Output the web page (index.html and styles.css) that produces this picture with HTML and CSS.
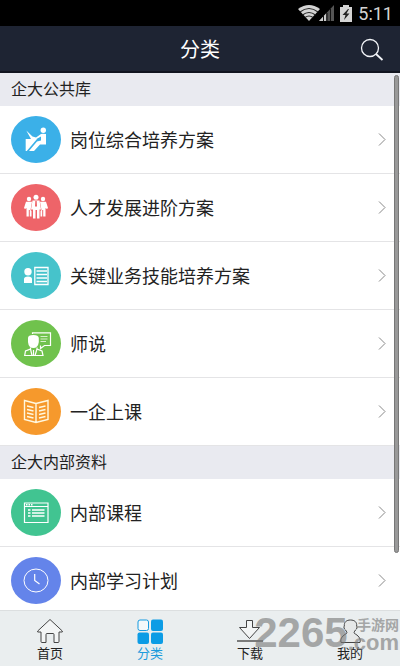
FILE: index.html
```html
<!DOCTYPE html>
<html lang="zh-CN">
<head>
<meta charset="utf-8">
<meta name="viewport" content="width=device-width, initial-scale=1">
<title>分类</title>
<link rel="stylesheet" href="styles.css">
</head>
<body>
<div class="status">
  <svg class="wifi" width="22" height="16" viewBox="0 0 22 16" aria-hidden="true"><path d="M0 4Q11-4 22 4L11 16Z" fill="#d4d4d4"/><path d="M2 7Q11 0 20 7M4.500 10Q11 5 17.500 10M7 12.500Q11 9.500 15 12.500" fill="none" stroke="#222" stroke-width="1.100"/></svg>
  <svg class="signal" width="16" height="16" viewBox="0 0 16 16" aria-hidden="true"><path d="M0 16L15 0V16Z" fill="#555"/><path d="M0 16L7 8.500V16Z" fill="#ccc"/><path d="M4.500 11V16M8 8V16M11.500 4V16" stroke="#111"/></svg>
  <svg class="battery" width="12" height="17" viewBox="0 0 12 17" aria-hidden="true"><path d="M3 0H9V2H12V17H0V2H3Z" fill="#d4d4d4"/><path d="M8 4L2.500 10H5.500L4 15L9.500 8.500H6.500L9 4Z" fill="#222"/></svg>
  <time class="clock">5:11</time>
</div>
<header class="bar">
  <h1 class="bar-title">分类</h1>
  <button class="search" type="button" aria-label="搜索"><svg width="24" height="24" viewBox="0 0 24 24"><circle cx="10" cy="10" r="8.500" fill="none" stroke="#f2f4f8" stroke-width="1.300"/><path d="M16 16L22.500 22" stroke="#f2f4f8" stroke-width="1.800"/></svg></button>
</header>
<main class="content">
  <h2 class="section">企大公共库</h2>
  <ul class="list">
    <li><a class="row" href="#post"><svg class="icon" viewBox="0 0 50 47"><ellipse cx="25" cy="23.500" rx="25" ry="23.500" fill="#3bb0e8"/><g fill="#fff"><circle cx="32.300" cy="14.200" r="2.700"/><path d="M15.300 14.500L21.500 20.500L25 21.500L30 18Q31 17.300 35 18V28.500H29L23 35H18L26 25.500L30 24.500V20.500L25.500 23H20Z"/><path d="M14.700 23H26L15.800 35H14.700Z"/></g></svg><span class="name">岗位综合培养方案</span><svg class="chevron" viewBox="0 0 8 13"><path d="M1 .5L7 6.500L1 12.500"/></svg></a></li>
    <li><a class="row" href="#talent"><svg class="icon" viewBox="0 0 50 47"><ellipse cx="25" cy="23.500" rx="25" ry="23.500" fill="#ee6469"/><g fill="#fff"><circle cx="25" cy="13.200" r="2.500"/><circle cx="18" cy="15" r="2.200"/><circle cx="32" cy="15" r="2.200"/><path d="M21.500 16.500H28.500L30 25.500H28.500V34.500H26V26H24.500V34.500H22V25.500H20Z"/><path d="M15 17.800H21L19.500 26L20.500 27V32.500H18.800V26H17.800V32.500H15.500V24L14 25L13 24Z"/><path d="M35 17.800H29L30.500 26L29.500 27V32.500H31.200V26H32.200V32.500H34.500V24L36 25L37 24Z"/></g><path d="M24.300 17H25.700L26 22L25 23L24 22Z" fill="#ee6469"/></svg><span class="name">人才发展进阶方案</span><svg class="chevron" viewBox="0 0 8 13"><path d="M1 .5L7 6.500L1 12.500"/></svg></a></li>
    <li><a class="row" href="#skills"><svg class="icon" viewBox="0 0 50 47"><ellipse cx="25" cy="23.500" rx="25" ry="23.500" fill="#46c3cb"/><circle cx="17" cy="19.700" r="3.700" fill="#fff"/><path d="M13 31V27Q13 24.500 17 24.500T21 27V31Z" fill="#fff"/><path d="M23.800 15.500H37V32.500H23.800ZM25.500 19H36M25.500 22.500H36M25.500 26H36M25.500 29.500H36" fill="none" stroke="#fff" stroke-width="1.300"/></svg><span class="name">关键业务技能培养方案</span><svg class="chevron" viewBox="0 0 8 13"><path d="M1 .5L7 6.500L1 12.500"/></svg></a></li>
    <li><a class="row" href="#teachers"><svg class="icon" viewBox="0 0 50 47"><ellipse cx="25" cy="23.500" rx="25" ry="23.500" fill="#70c24d"/><path d="M21.500 14V12.800H39.500V25.500H33.500L29.500 28.500V25.500" fill="none" stroke="#fff" stroke-width="1.200"/><path d="M29.500 16.500H36.500M29.500 19H36.500M29.500 21.500H35" stroke="#d8f0cc" stroke-width="1.200"/><path d="M17 18Q17 15 22.300 15T27.800 18V22Q27 28 22.300 28T17 22Z" fill="#fff"/><path d="M19.500 27.500V29L14.500 31L13.700 35.500H32L31 31L26 29V27.500M19.500 29L21 35.500M26 29L24 35.500M22.500 30V35" fill="none" stroke="#fff" stroke-width="1.200"/></svg><span class="name">师说</span><svg class="chevron" viewBox="0 0 8 13"><path d="M1 .5L7 6.500L1 12.500"/></svg></a></li>
    <li><a class="row" href="#lesson"><svg class="icon" viewBox="0 0 50 47"><ellipse cx="25" cy="23.500" rx="25" ry="23.500" fill="#f6992c"/><path d="M25 15.500L13.500 12.500V31.500L25 34.500L37 31.500V12.500ZV34.500" fill="none" stroke="#fff8e0" stroke-width="1.400"/><path d="M16 18L22.500 19.500M16 21.500L22.500 23M16 25L22.500 26.500M16 28.500L22.500 30M34.500 18L28 19.500M34.500 21.500L28 23M34.500 25L28 26.500M34.500 28.500L28 30" stroke="#fff8e0" stroke-width="1.400"/></svg><span class="name">一企上课</span><svg class="chevron" viewBox="0 0 8 13"><path d="M1 .5L7 6.500L1 12.500"/></svg></a></li>
  </ul>
  <h2 class="section">企大内部资料</h2>
  <ul class="list">
    <li><a class="row" href="#courses"><svg class="icon" viewBox="0 0 50 47"><ellipse cx="25" cy="23.500" rx="25" ry="23.500" fill="#41c491"/><path d="M13.500 14H37V33.500H13.500ZM13.500 17.500H37" fill="none" stroke="#fff" stroke-width="1.200"/><path d="M15 15.700H22" stroke="#fff" stroke-width="1.500" stroke-dasharray="1.500 1"/><path d="M17 21H19.500M21 21H33.500M17 24H19.500M21 24H33.500M17 27H19.500M21 27H33.500" stroke="#fff" stroke-width="1.300"/></svg><span class="name">内部课程</span><svg class="chevron" viewBox="0 0 8 13"><path d="M1 .5L7 6.500L1 12.500"/></svg></a></li>
    <li><a class="row" href="#plans"><svg class="icon" viewBox="0 0 50 47"><ellipse cx="25" cy="23.500" rx="25" ry="23.500" fill="#6484ea"/><ellipse cx="25" cy="23.500" rx="12" ry="11.500" fill="none" stroke="#fff"/><path d="M23.700 17V23.500L28.500 27" fill="none" stroke="#fff" stroke-width="1.200"/></svg><span class="name">内部学习计划</span><svg class="chevron" viewBox="0 0 8 13"><path d="M1 .5L7 6.500L1 12.500"/></svg></a></li>
  </ul>
  <div class="thumb"></div>
</main>
<nav class="tabs">
  <a class="tab" href="#home"><svg class="tab-icon" viewBox="0 0 26 26"><path d="M.7 13L13 1.500L25.300 13V14H22V23.500Q22 24.500 21 24.500H17V16.500Q17 15.500 16 15.500H10Q9 15.500 9 16.500V24.500H5Q4 24.500 4 23.500V14H.7Z" fill="#f3f5f5" stroke="#444"/></svg>首页</a>
  <a class="tab active" href="#category" aria-current="page"><svg class="tab-icon" viewBox="0 0 26 26"><rect x="1" y="2" width="10.500" height="10.500" rx="2" fill="#f4f8fa" stroke="#159be0"/><g fill="#0c9ce5"><rect x="14" y="1.500" width="12" height="11.500" rx="2"/><rect x=".5" y="14.500" width="11.500" height="11.500" rx="2"/><rect x="14" y="14.500" width="12" height="11.500" rx="2"/></g></svg>分类</a>
  <a class="tab" href="#download"><svg class="tab-icon" viewBox="0 0 26 26"><path d="M9.500 2.500H15.500V9.500H22.500L12.500 20.500L2.500 9.500H9.500Z" fill="#f3f5f5" stroke="#444"/><path d="M0 23H26" stroke="#555" stroke-width="1.500"/></svg>下载</a>
  <a class="tab" href="#me"><svg class="tab-icon" viewBox="0 0 26 26"><path d="M4 24.500C3 20 6 17.500 9.500 15.500C10.500 14.500 9.500 13.500 8.500 12C7 11 6.500 9 7.300 8C7 4 9.500 2 13.500 2S20 4 19.700 8C20.500 9 20 11 18.500 12C17.500 13.500 16.500 14.500 17.500 15.500C21 17.500 24 20 23 24.500Z" fill="#e6e8e8" stroke="#444"/></svg>我的</a>
  <div class="mark"><span class="mark-num">2265</span><span class="mark-side"><span class="mark-cn">手游网</span><span class="mark-com">.com</span></span></div>
</nav>
</body>
</html>
```
FILE: styles.css
```css
* {
  box-sizing: border-box;
}

body {
  margin: 0;
  height: 100vh;
  display: flex;
  flex-direction: column;
  overflow: hidden;
  background: #fff;
  color: #222;
  font-family: Roboto, "Noto Sans CJK SC", sans-serif;
}

a {
  color: inherit;
  text-decoration: none;
}

svg {
  display: block;
  flex: none;
}

.status {
  flex: none;
  height: 26px;
  padding: 0 7px;
  display: flex;
  align-items: center;
  justify-content: flex-end;
  background: #000;
}

.wifi {
  margin-right: -1px;
}

.battery {
  margin: 0 6px 0 5px;
}

.clock {
  padding-top: 2px;
  color: #d4d4d4;
  font-size: 18px;
  line-height: 24px;
}

.bar {
  flex: none;
  height: 47px;
  padding: 0 16px;
  display: grid;
  grid-template-columns: 1fr auto 1fr;
  align-items: center;
  background: #1e2433;
  border-bottom: 2px solid #11141f;
  color: #fff;
}

.bar-title {
  grid-column: 2;
  margin: 0;
  padding-top: 2px;
  font-size: 20px;
  line-height: 28px;
  font-weight: 400;
}

.search {
  justify-self: end;
  padding: 2px 0 0;
  border: 0;
  background: none;
}

.content {
  position: relative;
  flex: 1;
  min-height: 0;
  overflow: hidden;
}

.section {
  margin: 0;
  padding: 1px 11px 0;
  background: #e9eaf0;
  font-size: 16px;
  line-height: 32px;
  font-weight: 400;
}

.list {
  margin: 0;
  padding: 0;
  list-style: none;
}

.row {
  height: 68px;
  padding: 0 14px 0 11px;
  display: flex;
  align-items: center;
  border-bottom: 1px solid #e4e4e6;
}

.icon {
  width: 50px;
  height: 47px;
}

.name {
  flex: 1;
  padding: 2px 0 0 9px;
  font-size: 18px;
  line-height: 26px;
}

.chevron {
  width: 8px;
  height: 13px;
  fill: none;
  stroke: #888;
}

.thumb {
  position: absolute;
  top: 2px;
  right: 1px;
  width: 5px;
  height: 89%;
  border: 1px solid #777;
  border-radius: 3px;
  background: #999;
}

.tabs {
  position: relative;
  flex: none;
  height: 56px;
  display: grid;
  grid-template-columns: repeat(4, 1fr);
  background: #eaeeef;
  border-top: 1px solid #dcdfe0;
}

.tab {
  padding-top: 7px;
  display: flex;
  flex-direction: column;
  align-items: center;
  font-size: 13px;
  line-height: 20px;
}

.tab-icon {
  width: 26px;
  height: 26px;
}

.active {
  color: #1c9bdc;
}

.mark {
  position: absolute;
  top: 3px;
  right: 1px;
  display: flex;
  color: #777;
  opacity: .6;
  pointer-events: none;
  font-family: "Liberation Sans", "Noto Sans CJK SC", sans-serif;
  font-weight: 700;
}

.mark-num {
  font-size: 42px;
  line-height: 38px;
}

.mark-side {
  display: flex;
  flex-direction: column;
  align-items: flex-end;
}

.mark-cn {
  font-size: 14px;
  line-height: 22px;
}

.mark-com {
  font-size: 22px;
  line-height: 14px;
}
```
